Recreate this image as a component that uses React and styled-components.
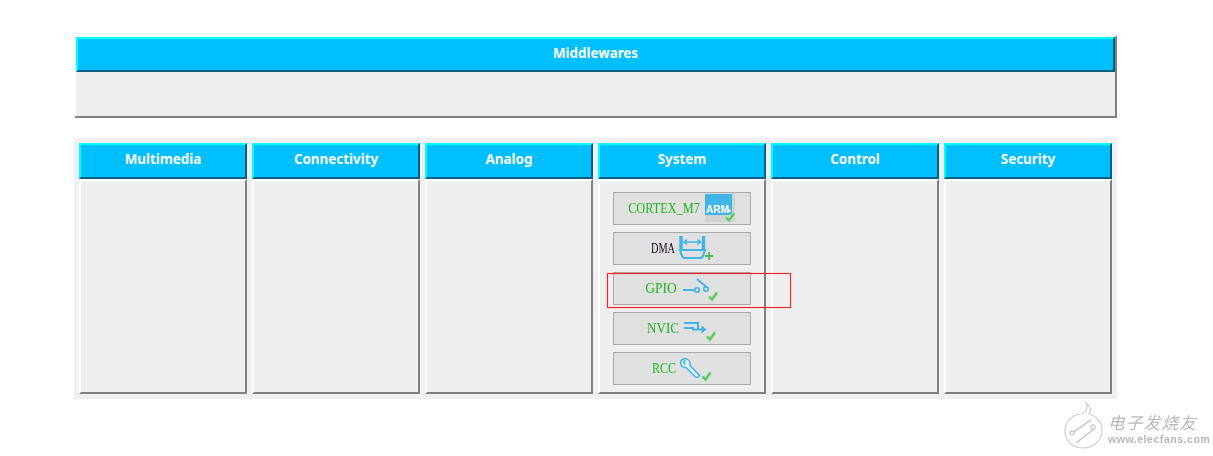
import React from "react";
import styled, { createGlobalStyle } from "styled-components";

const Global = createGlobalStyle`
  html, body { margin: 0; padding: 0; background: #fff; overflow: hidden; }
  body { font-family: "Noto Sans", "Liberation Sans", sans-serif; }
`;

const Page = styled.div`
  position: relative;
  width: 1213px;
  height: 456px;
  padding: 35px 96px 0 74px;
  box-sizing: border-box;
  display: flex;
  flex-direction: column;
  gap: 20px;
`;

const Header = styled.div`
  box-sizing: border-box;
  height: ${(p) => p.$h}px;
  padding-bottom: ${(p) => p.$lift}px;
  background: #00bfff;
  border-style: solid;
  border-width: 2px;
  border-color: #00ffff #005f7f #005f7f #00ffff;
  color: #fff;
  font: bold 13.4px "Noto Sans", "Liberation Sans", sans-serif;
  display: flex;
  align-items: center;
  justify-content: center;
`;

const TopPanel = styled.section`
  box-sizing: border-box;
  height: 83px;
  background: #efefef;
  border-style: solid;
  border-width: 2px;
  border-color: #fff #808080 #808080 #fff;
`;

const Tray = styled.section`
  box-sizing: border-box;
  height: 261px;
  padding: 5px;
  background: #f0f0f0;
  display: grid;
  grid-template-columns: repeat(6, 168px);
  column-gap: 5px;
`;

const Column = styled.div`
  display: flex;
  flex-direction: column;
`;

const ColumnBody = styled.div`
  flex: 1;
  box-sizing: border-box;
  background: #efefef;
  border-style: solid;
  border-width: 2px;
  border-color: #fff #808080 #808080 #fff;
  padding-top: 11px;
  display: flex;
  flex-direction: column;
  align-items: center;
  gap: 7px;
`;

const Item = styled.div`
  box-sizing: border-box;
  width: 138px;
  height: 33px;
  background: #e0e0e0;
  border: 1px solid #a9a9a9;
  padding-left: 1px;
  display: flex;
  align-items: center;
  justify-content: center;
  gap: ${(p) => p.$gap}px;
`;

const ItemLabel = styled.span`
  display: inline-flex;
  justify-content: center;
  width: ${(p) => p.$w}px;
  white-space: nowrap;
  font: 15px "Liberation Serif", serif;
  color: ${(p) => (p.$dark ? "#1a0a20" : "#1eb41e")};
  transform: scaleX(${(p) => p.$sx});
`;

const Highlight = styled.div`
  position: absolute;
  z-index: 2;
  left: 607px;
  top: 273px;
  width: 184px;
  height: 35px;
  box-sizing: border-box;
  border: 1px solid #ff2020;
  box-shadow: 0 0 1px rgba(255, 60, 60, 0.55), inset 0 0 1px rgba(255, 60, 60, 0.55);
`;

const Watermark = styled.div`
  position: absolute;
  left: 1064px;
  top: 402px;
  display: flex;
  align-items: flex-start;
  gap: 5px;
  filter: blur(0.4px);
`;

const MarkText = styled.div`
  display: flex;
  flex-direction: column;
  gap: 2px;
  color: #b8b8b8;
  padding-top: 11px;
`;

const MarkTitle = styled.span`
  font: italic 16.5px/19px "Noto Sans CJK SC", sans-serif;
  letter-spacing: 1.4px;
`;

const MarkUrl = styled.span`
  font: bold 10.5px/11px "Liberation Sans", sans-serif;
  letter-spacing: 0.55px;
`;

const BLUE = "#3fb4e6";

const Check = ({ x, y }) => (
  <g transform={`translate(${x} ${y})`}>
    <path d="M1 5.5 L4 8.5 L9 1.5" fill="none" stroke="#c4e8c4" strokeWidth="4" />
    <path d="M1 5.5 L4 8.5 L9 1.5" fill="none" stroke="#62c462" strokeWidth="2.4" />
  </g>
);

const ArmIcon = () => (
  <svg width="32" height="29" viewBox="0 0 32 29">
    <rect x="0" y="0" width="30" height="28" fill="#d2d2d2" />
    <rect x="0" y="0" width="27" height="21" fill={BLUE} />
    <text x="1" y="19" fontFamily="Liberation Sans" fontWeight="bold" fontSize="10" fill="#fff">ARM</text>
    <rect x="23" y="15.5" width="2.5" height="2.5" fill="#fff" />
    <Check x={20} y={18} />
  </svg>
);

const DmaIcon = () => (
  <svg width="36" height="27" viewBox="0 0 36 27">
    <path d="M3 1 V15 M25.5 1 V15" stroke={BLUE} strokeWidth="3.4" fill="none" />
    <path d="M6.5 7 H22 M9 4.5 L6 7 L9 9.5 M19.5 4.5 L22.5 7 L19.5 9.5" stroke={BLUE} strokeWidth="1.6" fill="none" />
    <path d="M2 15 H27 L25 21 Q24 23 22 23 H7 Q5 23 4 21 Z" stroke={BLUE} strokeWidth="2" fill="none" />
    <path d="M31 17 V25 M27 21 H35" stroke="#4cb84c" strokeWidth="1.8" fill="none" />
  </svg>
);

const GpioIcon = () => (
  <svg width="37" height="27" viewBox="0 0 37 27">
    <path d="M0 15 H12" stroke={BLUE} strokeWidth="2" />
    <circle cx="14" cy="15" r="2.2" fill="none" stroke={BLUE} strokeWidth="1.6" />
    <circle cx="23" cy="14" r="2.2" fill="none" stroke={BLUE} strokeWidth="1.6" />
    <path d="M14 4 L24 12.5" stroke={BLUE} strokeWidth="2" />
    <Check x={25} y={16} />
  </svg>
);

const NvicIcon = () => (
  <svg width="35" height="27" viewBox="0 0 35 27">
    <path d="M1 8 H15 V14" stroke={BLUE} strokeWidth="2" fill="none" />
    <path d="M1 13 H10 V14.5 H20" stroke={BLUE} strokeWidth="2" fill="none" />
    <path d="M18.5 10.5 L23.5 14.5 L18.5 18.5 Z" fill={BLUE} />
    <Check x={23} y={16} />
  </svg>
);

const RccIcon = () => (
  <svg width="34" height="27" viewBox="0 0 34 27">
    <path
      d="M8 4 Q2 3 1.5 8 Q2 12.5 7 12.5 L16 21.5 Q19 23.5 20.5 20.5 L11 10.5 Q12 7 8 4 Z M6.5 5 L4.5 7.5 L6.5 9.5"
      fill="#e6f5fb"
      stroke={BLUE}
      strokeWidth="1.5"
    />
    <Check x={22.5} y={16} />
  </svg>
);

const WatermarkLogo = () => (
  <svg width="39" height="47" viewBox="0 0 39 47">
    <path
      d="M22 1 C25 8 20 11 18 12 C8 12 1 20 1 29 C1 39 9 46 19 46 C30 46 38 38 38 28 C38 20 32 14 25 12 C28 9 26 4 22 1 Z"
      fill="#fff"
      stroke="#cfcfcf"
      strokeWidth="1.2"
    />
    <path d="M8 31 L27 18 M12 41 L30 27" stroke="#bdbdbd" strokeWidth="1.3" fill="none" />
    <circle cx="8" cy="31" r="2.2" fill="#fff" stroke="#b5b5b5" />
    <circle cx="29" cy="25" r="2.2" fill="#fff" stroke="#b5b5b5" />
  </svg>
);

const columns = ["Multimedia", "Connectivity", "Analog", "System", "Control", "Security"];

export default function App() {
  return (
    <Page>
      <Global />
      <TopPanel>
        <Header $h={35} $lift={4}>Middlewares</Header>
      </TopPanel>
      <Tray>
        {columns.map((name) => (
          <Column key={name}>
            <Header $h={36} $lift={5}>{name}</Header>
            <ColumnBody>
              {name === "System" && (
                <>
                  <Item $gap={5}>
                    <ItemLabel $w={72} $sx={0.82}>CORTEX_M7</ItemLabel>
                    <ArmIcon />
                  </Item>
                  <Item $gap={3}>
                    <ItemLabel $w={24} $sx={0.69} $dark>DMA</ItemLabel>
                    <DmaIcon />
                  </Item>
                  <Item $gap={6}>
                    <ItemLabel $w={32} $sx={0.9}>GPIO</ItemLabel>
                    <GpioIcon />
                  </Item>
                  <Item $gap={4}>
                    <ItemLabel $w={32} $sx={0.87}>NVIC</ItemLabel>
                    <NvicIcon />
                  </Item>
                  <Item $gap={3}>
                    <ItemLabel $w={24} $sx={0.8}>RCC</ItemLabel>
                    <RccIcon />
                  </Item>
                </>
              )}
            </ColumnBody>
          </Column>
        ))}
      </Tray>
      <Highlight />
      <Watermark>
        <WatermarkLogo />
        <MarkText>
          <MarkTitle>电子发烧友</MarkTitle>
          <MarkUrl>www.elecfans.com</MarkUrl>
        </MarkText>
      </Watermark>
    </Page>
  );
}
